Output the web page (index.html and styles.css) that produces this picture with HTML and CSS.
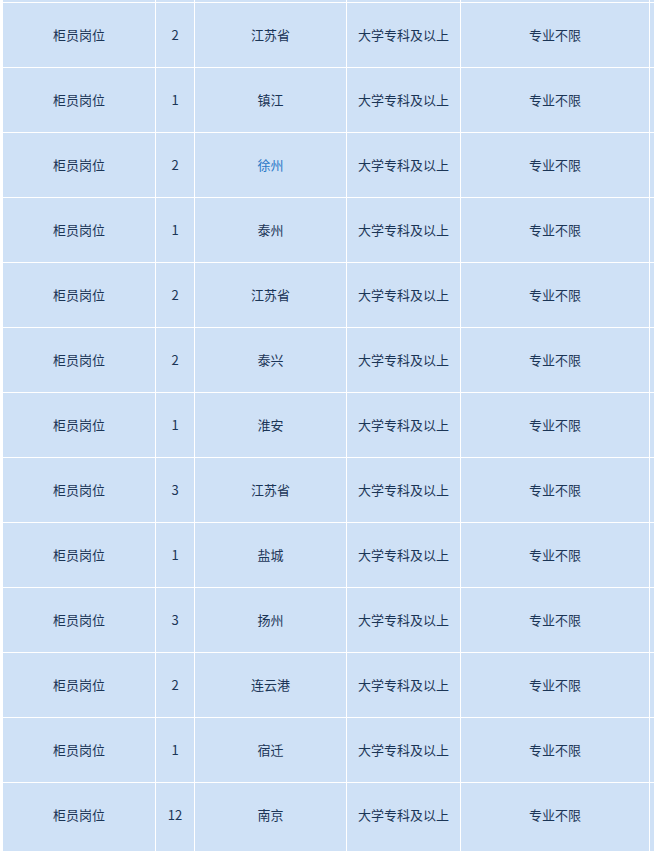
FILE: index.html
```html
<!DOCTYPE html>
<html lang="zh-CN">
<head>
<meta charset="utf-8">
<title>岗位表</title>
<link rel="stylesheet" href="styles.css">
</head>
<body>
<div class="frame">
<table class="jobs">
  <tbody>
    <tr class="prev"><td></td><td></td><td></td><td></td><td></td><td></td></tr>
    <tr><td>柜员岗位</td><td>2</td><td>江苏省</td><td>大学专科及以上</td><td>专业不限</td><td></td></tr>
    <tr><td>柜员岗位</td><td>1</td><td>镇江</td><td>大学专科及以上</td><td>专业不限</td><td></td></tr>
    <tr><td>柜员岗位</td><td>2</td><td class="link">徐州</td><td>大学专科及以上</td><td>专业不限</td><td></td></tr>
    <tr><td>柜员岗位</td><td>1</td><td>泰州</td><td>大学专科及以上</td><td>专业不限</td><td></td></tr>
    <tr><td>柜员岗位</td><td>2</td><td>江苏省</td><td>大学专科及以上</td><td>专业不限</td><td></td></tr>
    <tr><td>柜员岗位</td><td>2</td><td>泰兴</td><td>大学专科及以上</td><td>专业不限</td><td></td></tr>
    <tr><td>柜员岗位</td><td>1</td><td>淮安</td><td>大学专科及以上</td><td>专业不限</td><td></td></tr>
    <tr><td>柜员岗位</td><td>3</td><td>江苏省</td><td>大学专科及以上</td><td>专业不限</td><td></td></tr>
    <tr><td>柜员岗位</td><td>1</td><td>盐城</td><td>大学专科及以上</td><td>专业不限</td><td></td></tr>
    <tr><td>柜员岗位</td><td>3</td><td>扬州</td><td>大学专科及以上</td><td>专业不限</td><td></td></tr>
    <tr><td>柜员岗位</td><td>2</td><td>连云港</td><td>大学专科及以上</td><td>专业不限</td><td></td></tr>
    <tr><td>柜员岗位</td><td>1</td><td>宿迁</td><td>大学专科及以上</td><td>专业不限</td><td></td></tr>
    <tr class="last"><td>柜员岗位</td><td>12</td><td>南京</td><td>大学专科及以上</td><td>专业不限</td><td></td></tr>
  </tbody>
</table>
</div>
</body>
</html>
```
FILE: styles.css
```css
html, body {
  margin: 0;
  padding: 0;
  background: #ffffff;
}
.frame {
  width: 654px;
  height: 851px;
  overflow: hidden;
}
.jobs {
  border-collapse: separate;
  border-spacing: 1px;
  background: #ffffff;
  margin: -1px 0 0 2px;
  table-layout: fixed;
  width: 749px;
  font-family: "Noto Sans CJK SC", "Microsoft YaHei", sans-serif;
  font-size: 13px;
  color: #1b3556;
}
.jobs td {
  background: #cfe1f6;
  height: 64px;
  padding: 0;
  text-align: center;
  vertical-align: middle;
  line-height: 18px;
}
.jobs td:nth-child(1) { width: 152px; }
.jobs td:nth-child(2) { width: 38px; }
.jobs td:nth-child(3) { width: 151px; }
.jobs td:nth-child(4) { width: 113px; }
.jobs td:nth-child(5) { width: 188px; }
.jobs td:nth-child(6) { width: 100px; }
.jobs .prev td {
  height: 2px;
}
.jobs .last td {
  padding-bottom: 8px;
}
.jobs .link {
  color: #2a78c6;
}
```
